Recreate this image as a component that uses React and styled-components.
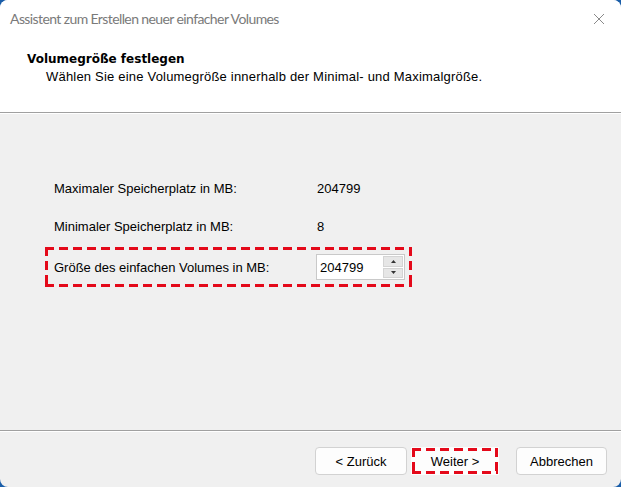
import React from "react";
import styled, { createGlobalStyle, css } from "styled-components";

const Global = createGlobalStyle`
  html, body { margin: 0; padding: 0; background: #1a5ea9; }
  body { width: 621px; height: 487px; overflow: hidden; }
  * { box-sizing: border-box; }
`;

const dashed = (color) => css`
  background:
    repeating-linear-gradient(90deg, ${color} 0 9px, transparent 9px 14px) top left / 100% 3px no-repeat,
    repeating-linear-gradient(90deg, ${color} 0 9px, transparent 9px 14px) bottom left / 100% 3px no-repeat,
    repeating-linear-gradient(180deg, ${color} 0 9px, transparent 9px 14px) top left / 3px 100% no-repeat,
    repeating-linear-gradient(180deg, ${color} 0 9px, transparent 9px 14px) top right / 3px 100% no-repeat;
`;

const Window = styled.div`
  width: 621px;
  height: 487px;
  border-radius: 8px;
  overflow: hidden;
  background: #f0f0f0;
  display: flex;
  flex-direction: column;
  font-family: "Liberation Sans", Arial, sans-serif;
  font-size: 13px;
  color: #000;
`;

const TitleBar = styled.div`
  height: 38px;
  flex: none;
  background: #fff;
  display: flex;
  align-items: center;
  justify-content: space-between;
  padding: 0 16px 0 10px;
`;

const Title = styled.div`
  font-family: Lato, "Open Sans", sans-serif;
  font-size: 14px;
  letter-spacing: -0.6px;
  color: #7a7a7a;
  margin-top: -1px;
`;

const CloseBtn = styled.div`
  width: 12px;
  height: 12px;
  display: flex;
`;

const Header = styled.div`
  height: 75px;
  flex: none;
  background: #fff;
  padding: 13px 0 0 27px;
  border-bottom: 1px solid #a0a0a0;
  box-shadow: 0 1px 0 #fff;
`;

const Heading = styled.div`
  font-family: "DejaVu Sans", Verdana, sans-serif;
  font-size: 12px;
  font-weight: bold;
  line-height: 16px;
`;

const Sub = styled.div`
  line-height: 16px;
  letter-spacing: 0.2px;
  margin: 2px 0 0 19px;
`;

const Body = styled.div`
  flex: 1;
  margin-top: 1px;
  padding: 57px 0 0 45px;
  display: flex;
  flex-direction: column;
  gap: 4px;
  border-bottom: 1px solid #a0a0a0;
`;

const Row = styled.div`
  width: 367px;
  height: ${(p) => (p.$highlight ? 40 : 34)}px;
  display: flex;
  align-items: center;
  padding-left: 9px;
  ${(p) => p.$highlight && dashed("#e4091a")}
`;

const Label = styled.div`
  width: 262px;
`;

const Value = styled.div`
  padding-left: 1px;
`;

const Spin = styled.div`
  display: flex;
  height: 26px;
  border: 1px solid #c9c9c9;
  background: #fff;
`;

const SpinInput = styled.div`
  width: 65px;
  padding-left: 3px;
  display: flex;
  align-items: center;
  font-size: 13px;
`;

const SpinButtons = styled.div`
  width: 22px;
  display: flex;
  flex-direction: column;
  gap: 1px;
  background: #fff;
  padding: 1px;
`;

const SpinBtn = styled.div`
  flex: 1;
  background: #e6e6e6;
  border: 1px solid #d4d4d4;
  display: flex;
  align-items: center;
  justify-content: center;
`;

const Footer = styled.div`
  height: 56px;
  flex: none;
  border-top: 1px solid #fff;
  display: flex;
  align-items: flex-start;
  padding: 15px 14px 0 0;
  justify-content: flex-end;
`;

const Button = styled.div`
  width: ${(p) => p.$w}px;
  height: 28px;
  margin-left: ${(p) => p.$ml || 0}px;
  display: flex;
  align-items: center;
  justify-content: center;
  background: #fdfdfd;
  border: 1px solid #d2d2d2;
  border-radius: 4px;
  font-size: 13px;
  ${(p) =>
    p.$focus &&
    css`
      border-color: transparent;
      border-radius: 0;
      ${dashed("#e4091a")}
      background-color: #fdfdfd;
    `}
`;

const Tri = ({ up }) => (
  <svg width="5" height="3" viewBox="0 0 5 3">
    <path d={up ? "M0 3 L2.5 0 L5 3 Z" : "M0 0 L2.5 3 L5 0 Z"} fill="#333" />
  </svg>
);

export default function App() {
  return (
    <>
      <Global />
      <Window>
        <TitleBar>
          <Title>Assistent zum Erstellen neuer einfacher Volumes</Title>
          <CloseBtn>
            <svg width="12" height="12" viewBox="0 0 12 12">
              <path d="M1 1 L11 11 M11 1 L1 11" stroke="#8a8a8a" strokeWidth="1" />
            </svg>
          </CloseBtn>
        </TitleBar>
        <Header>
          <Heading>Volumegröße festlegen</Heading>
          <Sub>Wählen Sie eine Volumegröße innerhalb der Minimal- und Maximalgröße.</Sub>
        </Header>
        <Body>
          <Row>
            <Label>Maximaler Speicherplatz in MB:</Label>
            <Value>204799</Value>
          </Row>
          <Row>
            <Label>Minimaler Speicherplatz in MB:</Label>
            <Value>8</Value>
          </Row>
          <Row $highlight>
            <Label>Größe des einfachen Volumes in MB:</Label>
            <Spin>
              <SpinInput>204799</SpinInput>
              <SpinButtons>
                <SpinBtn><Tri up /></SpinBtn>
                <SpinBtn><Tri /></SpinBtn>
              </SpinButtons>
            </Spin>
          </Row>
        </Body>
        <Footer>
          <Button $w={92}>&lt; Zurück</Button>
          <Button $w={88} $ml={4} $focus>Weiter &gt;</Button>
          <Button $w={91} $ml={17}>Abbrechen</Button>
        </Footer>
      </Window>
    </>
  );
}
